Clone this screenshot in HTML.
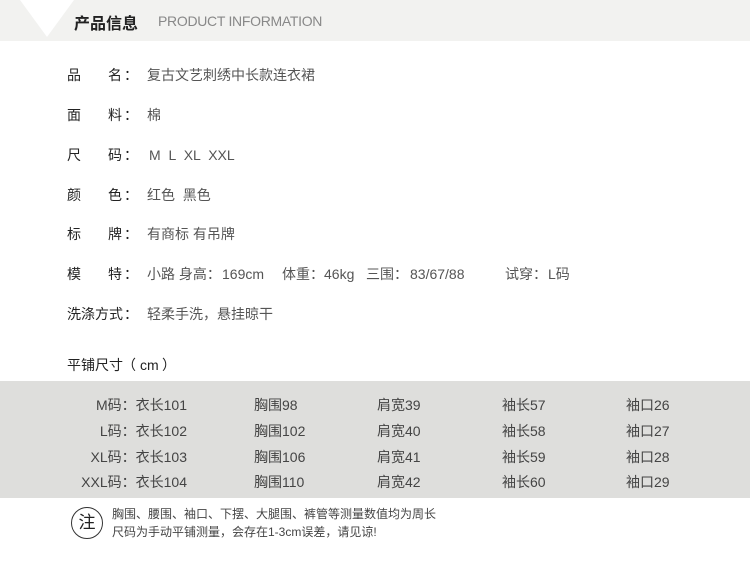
<!DOCTYPE html>
<html><head><meta charset="utf-8"><style>
body{margin:0;width:750px;height:567px;background:#fff;position:relative;overflow:hidden;font-family:"Liberation Sans","Noto Sans CJK SC",sans-serif;color:#333}
.hd{position:absolute;left:0;top:0;width:750px;height:41px;background:#f2f2f0}
.t{position:absolute;white-space:nowrap}
.l{position:absolute;font-size:14px;color:#222;white-space:nowrap}
.v{position:absolute;font-size:14px;color:#555;white-space:nowrap}
.band{position:absolute;left:0;top:381px;width:750px;height:117px;background:#dededc}
.c{position:absolute;font-size:14px;color:#444;white-space:nowrap}
</style></head><body>
<div class="hd"></div>
<svg style="position:absolute;left:0;top:0" width="100" height="41"><polygon points="20,0 74,0 47,37" fill="#fff"/></svg>
<div class="t" style="left:74px;top:10px;font-size:16px;color:#222;font-weight:bold">产品信息</div>
<div class="t" style="left:158px;top:13px;font-size:14px;color:#888;letter-spacing:-0.3px">PRODUCT INFORMATION</div>

<div class="l" style="left:67px;top:65px">品</div><div class="l" style="left:108px;top:65px">名</div><div class="l" style="left:124px;top:65px">：</div><div class="v" style="left:147px;top:65px">复古文艺刺绣中长款连衣裙</div>
<div class="l" style="left:67px;top:105px">面</div><div class="l" style="left:108px;top:105px">料</div><div class="l" style="left:124px;top:105px">：</div><div class="v" style="left:147px;top:105px">棉</div>
<div class="l" style="left:67px;top:145px">尺</div><div class="l" style="left:108px;top:145px">码</div><div class="l" style="left:124px;top:145px">：</div><div class="v" style="left:149px;top:147px;word-spacing:4px">M L XL XXL</div>
<div class="l" style="left:67px;top:185px">颜</div><div class="l" style="left:108px;top:185px">色</div><div class="l" style="left:124px;top:185px">：</div><div class="v" style="left:147px;top:185px">红色&nbsp;&nbsp;黑色</div>
<div class="l" style="left:67px;top:224px">标</div><div class="l" style="left:108px;top:224px">牌</div><div class="l" style="left:124px;top:224px">：</div><div class="v" style="left:147px;top:224px">有商标 有吊牌</div>
<div class="l" style="left:67px;top:264px">模</div><div class="l" style="left:108px;top:264px">特</div><div class="l" style="left:124px;top:264px">：</div>
<div class="v" style="left:147px;top:264px">小路 身高：</div><div class="v" style="left:222px;top:266px">169cm</div>
<div class="v" style="left:282px;top:264px">体重：</div><div class="v" style="left:324px;top:266px">46kg</div>
<div class="v" style="left:366px;top:264px">三围：</div><div class="v" style="left:410px;top:266px">83/67/88</div>
<div class="v" style="left:505px;top:264px">试穿：</div><div class="v" style="left:548px;top:264px">L码</div>
<div class="l" style="left:67px;top:304px">洗涤方式</div><div class="l" style="left:124px;top:304px">：</div><div class="v" style="left:147px;top:304px">轻柔手洗，悬挂晾干</div>
<div class="l" style="left:67px;top:355px">平铺尺寸</div><div class="l" style="left:122px;top:355px">（</div><div class="l" style="left:140px;top:357px">cm</div><div class="l" style="left:162px;top:355px">）</div>

<div class="band"></div>
<div class="c" style="right:563px;top:395px">M码：衣长101</div>
<div class="c" style="right:563px;top:421px">L码：衣长102</div>
<div class="c" style="right:563px;top:447px">XL码：衣长103</div>
<div class="c" style="right:563px;top:472px">XXL码：衣长104</div>
<div class="c" style="left:254px;top:395px">胸围98</div>
<div class="c" style="left:254px;top:421px">胸围102</div>
<div class="c" style="left:254px;top:447px">胸围106</div>
<div class="c" style="left:254px;top:472px">胸围110</div>
<div class="c" style="left:377px;top:395px">肩宽39</div>
<div class="c" style="left:377px;top:421px">肩宽40</div>
<div class="c" style="left:377px;top:447px">肩宽41</div>
<div class="c" style="left:377px;top:472px">肩宽42</div>
<div class="c" style="left:502px;top:395px">袖长57</div>
<div class="c" style="left:502px;top:421px">袖长58</div>
<div class="c" style="left:502px;top:447px">袖长59</div>
<div class="c" style="left:502px;top:472px">袖长60</div>
<div class="c" style="left:626px;top:395px">袖口26</div>
<div class="c" style="left:626px;top:421px">袖口27</div>
<div class="c" style="left:626px;top:447px">袖口28</div>
<div class="c" style="left:626px;top:472px">袖口29</div>

<div style="position:absolute;left:71px;top:507px;width:30px;height:30px;border:1.5px solid #333;border-radius:50%;font-size:17px;line-height:30px;text-align:center;color:#222">注</div>
<div class="t" style="left:112px;top:505px;font-size:12px;color:#444">胸围、腰围、袖口、下摆、大腿围、裤管等测量数值均为周长</div>
<div class="t" style="left:112px;top:523px;font-size:12px;color:#444">尺码为手动平铺测量，会存在1-3cm误差，请见谅!</div>
</body></html>
